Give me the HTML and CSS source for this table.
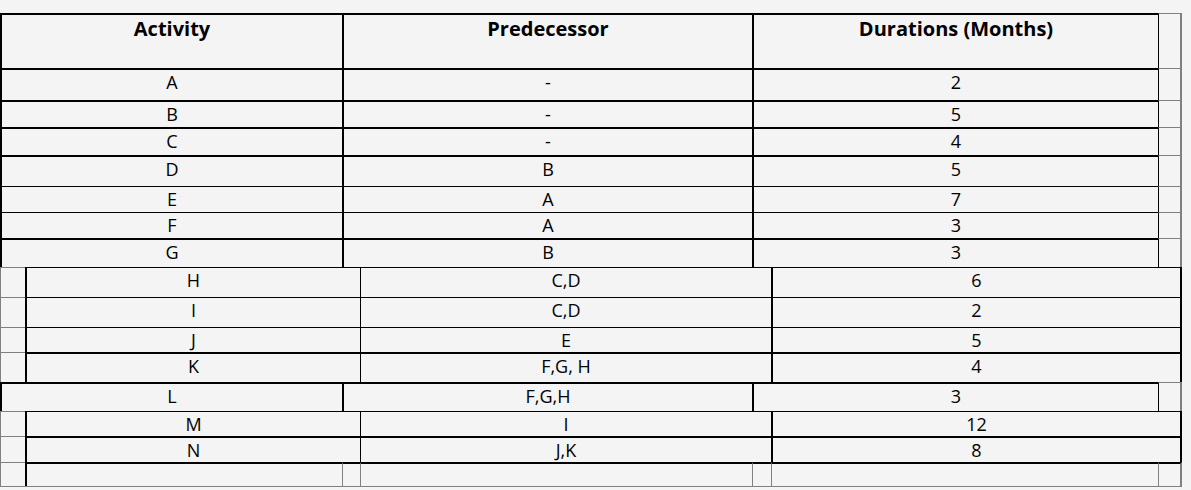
FILE: index.html
```html
<!DOCTYPE html>
<html>
<head>
<meta charset="utf-8">
<title>Activities</title>
<link rel="stylesheet" href="styles.css">
</head>
<body>
<div class="table">
  <div class="row ga t2 h55 head">
    <div class="cell">Activity</div>
    <div class="cell">Predecessor</div>
    <div class="cell">Durations (Months)</div>
    <div class="cell ghost"></div>
  </div>
  <div class="row ga t2 h32">
    <div class="cell">A</div><div class="cell">-</div><div class="cell">2</div><div class="cell ghost"></div>
  </div>
  <div class="row ga t2 h27">
    <div class="cell">B</div><div class="cell">-</div><div class="cell">5</div><div class="cell ghost"></div>
  </div>
  <div class="row ga t2 h28">
    <div class="cell">C</div><div class="cell">-</div><div class="cell">4</div><div class="cell ghost"></div>
  </div>
  <div class="row ga t2 h31">
    <div class="cell">D</div><div class="cell">B</div><div class="cell">5</div><div class="cell ghost"></div>
  </div>
  <div class="row ga t1 h26">
    <div class="cell">E</div><div class="cell">A</div><div class="cell">7</div><div class="cell ghost"></div>
  </div>
  <div class="row ga t1 h26">
    <div class="cell">F</div><div class="cell">A</div><div class="cell">3</div><div class="cell ghost"></div>
  </div>
  <div class="row ga t2 h29">
    <div class="cell">G</div><div class="cell">B</div><div class="cell">3</div><div class="cell ghost"></div>
  </div>
  <div class="row gb t1 h30">
    <div class="cell ghost"></div><div class="cell">H</div><div class="cell">C,D</div><div class="cell">6</div>
  </div>
  <div class="row gb t1 h30">
    <div class="cell ghost"></div><div class="cell">I</div><div class="cell">C,D</div><div class="cell">2</div>
  </div>
  <div class="row gb t1 h25">
    <div class="cell ghost"></div><div class="cell">J</div><div class="cell">E</div><div class="cell">5</div>
  </div>
  <div class="row gb t2 h30">
    <div class="cell ghost"></div><div class="cell">K</div><div class="cell">F,G, H</div><div class="cell">4</div>
  </div>
  <div class="row ga t2 h29">
    <div class="cell">L</div><div class="cell">F,G,H</div><div class="cell">3</div><div class="cell ghost"></div>
  </div>
  <div class="row gb t1 h25">
    <div class="cell ghost"></div><div class="cell">M</div><div class="cell">I</div><div class="cell">12</div>
  </div>
  <div class="row gb t2 h26">
    <div class="cell ghost"></div><div class="cell">N</div><div class="cell">J,K</div><div class="cell">8</div>
  </div>
  <div class="row gz t2 h24">
    <div class="cell ghost"></div><div class="cell"></div><div class="cell"></div><div class="cell"></div><div class="cell"></div><div class="cell"></div><div class="cell"></div>
  </div>
</div>
</body>
</html>
```

FILE: styles.css
```css
html, body {
  margin: 0;
  padding: 0;
  background: #f4f4f4;
}

body {
  font-family: "Open Sans", "Noto Sans", sans-serif;
  font-size: 18px;
  color: #000;
}

.table {
  width: 1182px;
  padding-top: 13px;
}

.row {
  display: grid;
  box-sizing: border-box;
}

.t1 { --bt: 1px; }
.t2 { --bt: 2px; }

.h24 { height: 24px; }
.h25 { height: 25px; }
.h26 { height: 26px; }
.h27 { height: 27px; }
.h28 { height: 28px; }
.h29 { height: 29px; }
.h30 { height: 30px; }
.h31 { height: 31px; }
.h32 { height: 32px; }
.h55 { height: 55px; }

.cell {
  box-sizing: border-box;
  border-top: var(--bt) solid #000;
  text-align: center;
  line-height: normal;
  white-space: nowrap;
  overflow: hidden;
}

.cell.ghost {
  border-top: 1px solid #808080;
}

.head .cell {
  font-weight: 700;
  font-size: 20px;
}

/* grid A: Activity | Predecessor | Duration | ghost column on the right */
.ga {
  grid-template-columns: 342px 410px 406px 24px;
}
.ga .cell:nth-child(1),
.ga .cell:nth-child(2),
.ga .cell:nth-child(3) {
  border-left: 2px solid #000;
}
.ga .cell.ghost {
  border-left: 1px solid #000;
  border-right: 2px solid #808080;
}

/* grid B: ghost column on the left | Activity | Predecessor | Duration */
.gb {
  grid-template-columns: 25px 335px 411px 411px;
}
.gb .cell.ghost {
  border-left: 1px solid #808080;
}
.gb .cell:nth-child(2) {
  border-left: 2px solid #000;
}
.gb .cell:nth-child(3) {
  border-left: 1px solid #000;
}
.gb .cell:nth-child(4) {
  border-left: 2px solid #000;
  border-right: 2px solid #000;
}

/* empty trailing row showing both grids */
.gz {
  grid-template-columns: 25px 317px 18px 392px 19px 387px 24px;
  border-bottom: 1px solid #808080;
  height: 25px;
}
.gz .cell {
  border-left: 1px solid #808080;
}
.gz .cell:nth-child(2) {
  border-left: 2px solid #000;
}
.gz .cell:last-child {
  border-right: 2px solid #808080;
}
```
